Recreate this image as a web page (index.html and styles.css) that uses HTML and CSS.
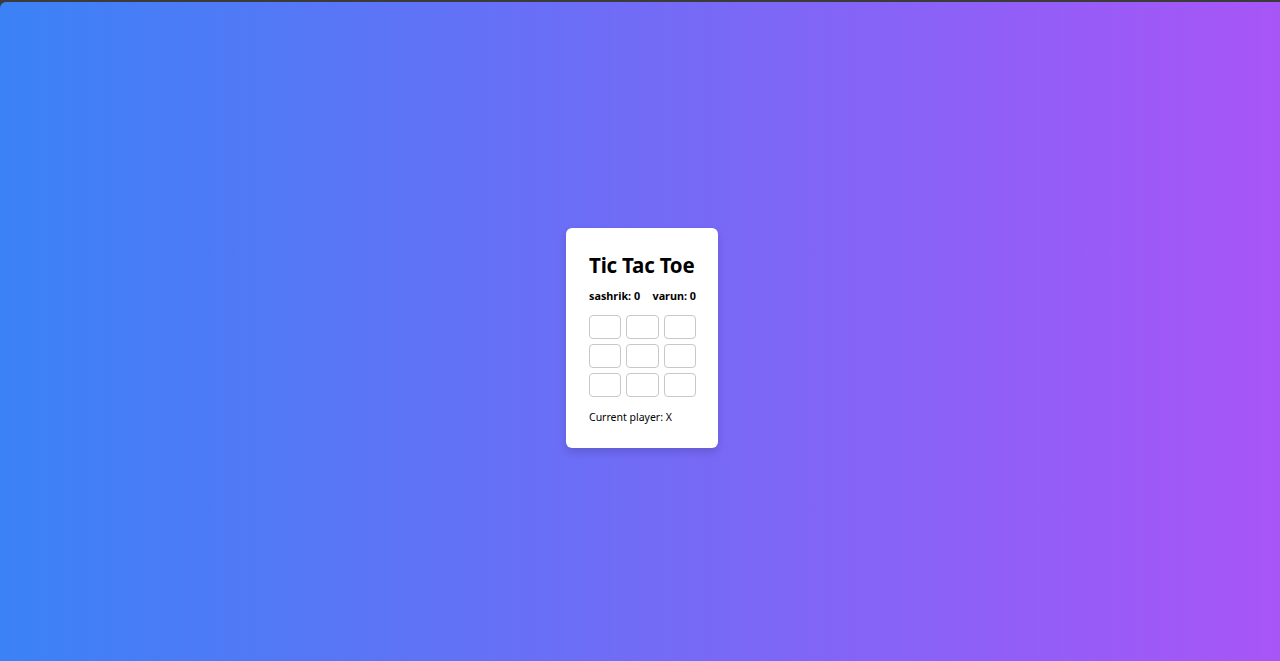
FILE: index.html
```html
<!DOCTYPE html>
<html>
<head>
<meta charset="utf-8">
<link rel="stylesheet" href="styles.css">
</head>
<body>
<div class="topbar"></div>
<main class="page">
  <div class="card">
    <h1 class="title">Tic Tac Toe</h1>
    <div class="scores">
      <span>sashrik: 0</span>
      <span>varun: 0</span>
    </div>
    <div class="board">
      <button class="cell"></button>
      <button class="cell"></button>
      <button class="cell"></button>
      <button class="cell"></button>
      <button class="cell"></button>
      <button class="cell"></button>
      <button class="cell"></button>
      <button class="cell"></button>
      <button class="cell"></button>
    </div>
    <p class="status">Current player: X</p>
  </div>
</main>
</body>
</html>
```

FILE: styles.css
```css
html, body {
  margin: 0;
  padding: 0;
  height: 100%;
}
body {
  background: #3b3b3b;
  font-family: "Noto Sans", "Open Sans", sans-serif;
  display: flex;
  flex-direction: column;
}
.topbar {
  height: 2px;
  background: #3b3b3b;
  flex: none;
}
.page {
  flex: 1;
  background: linear-gradient(to right, #3b82f6, #a855f7);
  border-top-left-radius: 6px;
  display: flex;
  align-items: center;
  justify-content: center;
}
.card {
  background: #fff;
  border-radius: 6px;
  padding: 22px 22px 23px 23px;
  box-shadow: 0 4px 8px rgba(0,0,0,0.15);
  width: 107px;
  margin-top: 12px;
  margin-left: 4px;
}
.title {
  margin: 0;
  font-size: 20.5px;
  font-weight: 700;
  line-height: 30px;
  color: #000;
  white-space: nowrap;
  letter-spacing: -0.2px;
}
.scores {
  margin-top: 8px;
  display: flex;
  justify-content: space-between;
  font-size: 10.8px;
  font-weight: 700;
  line-height: 15px;
  color: #000;
}
.board {
  margin-top: 12px;
  display: grid;
  grid-template-columns: repeat(3, 1fr);
  column-gap: 5px;
  row-gap: 5px;
}
.cell {
  height: 24px;
  background: #fff;
  border: 1px solid #c8c8c8;
  border-radius: 4px;
  padding: 0;
}
.status {
  margin: 13px 0 0 0;
  font-size: 10.5px;
  line-height: 15px;
  color: #000;
}
```
